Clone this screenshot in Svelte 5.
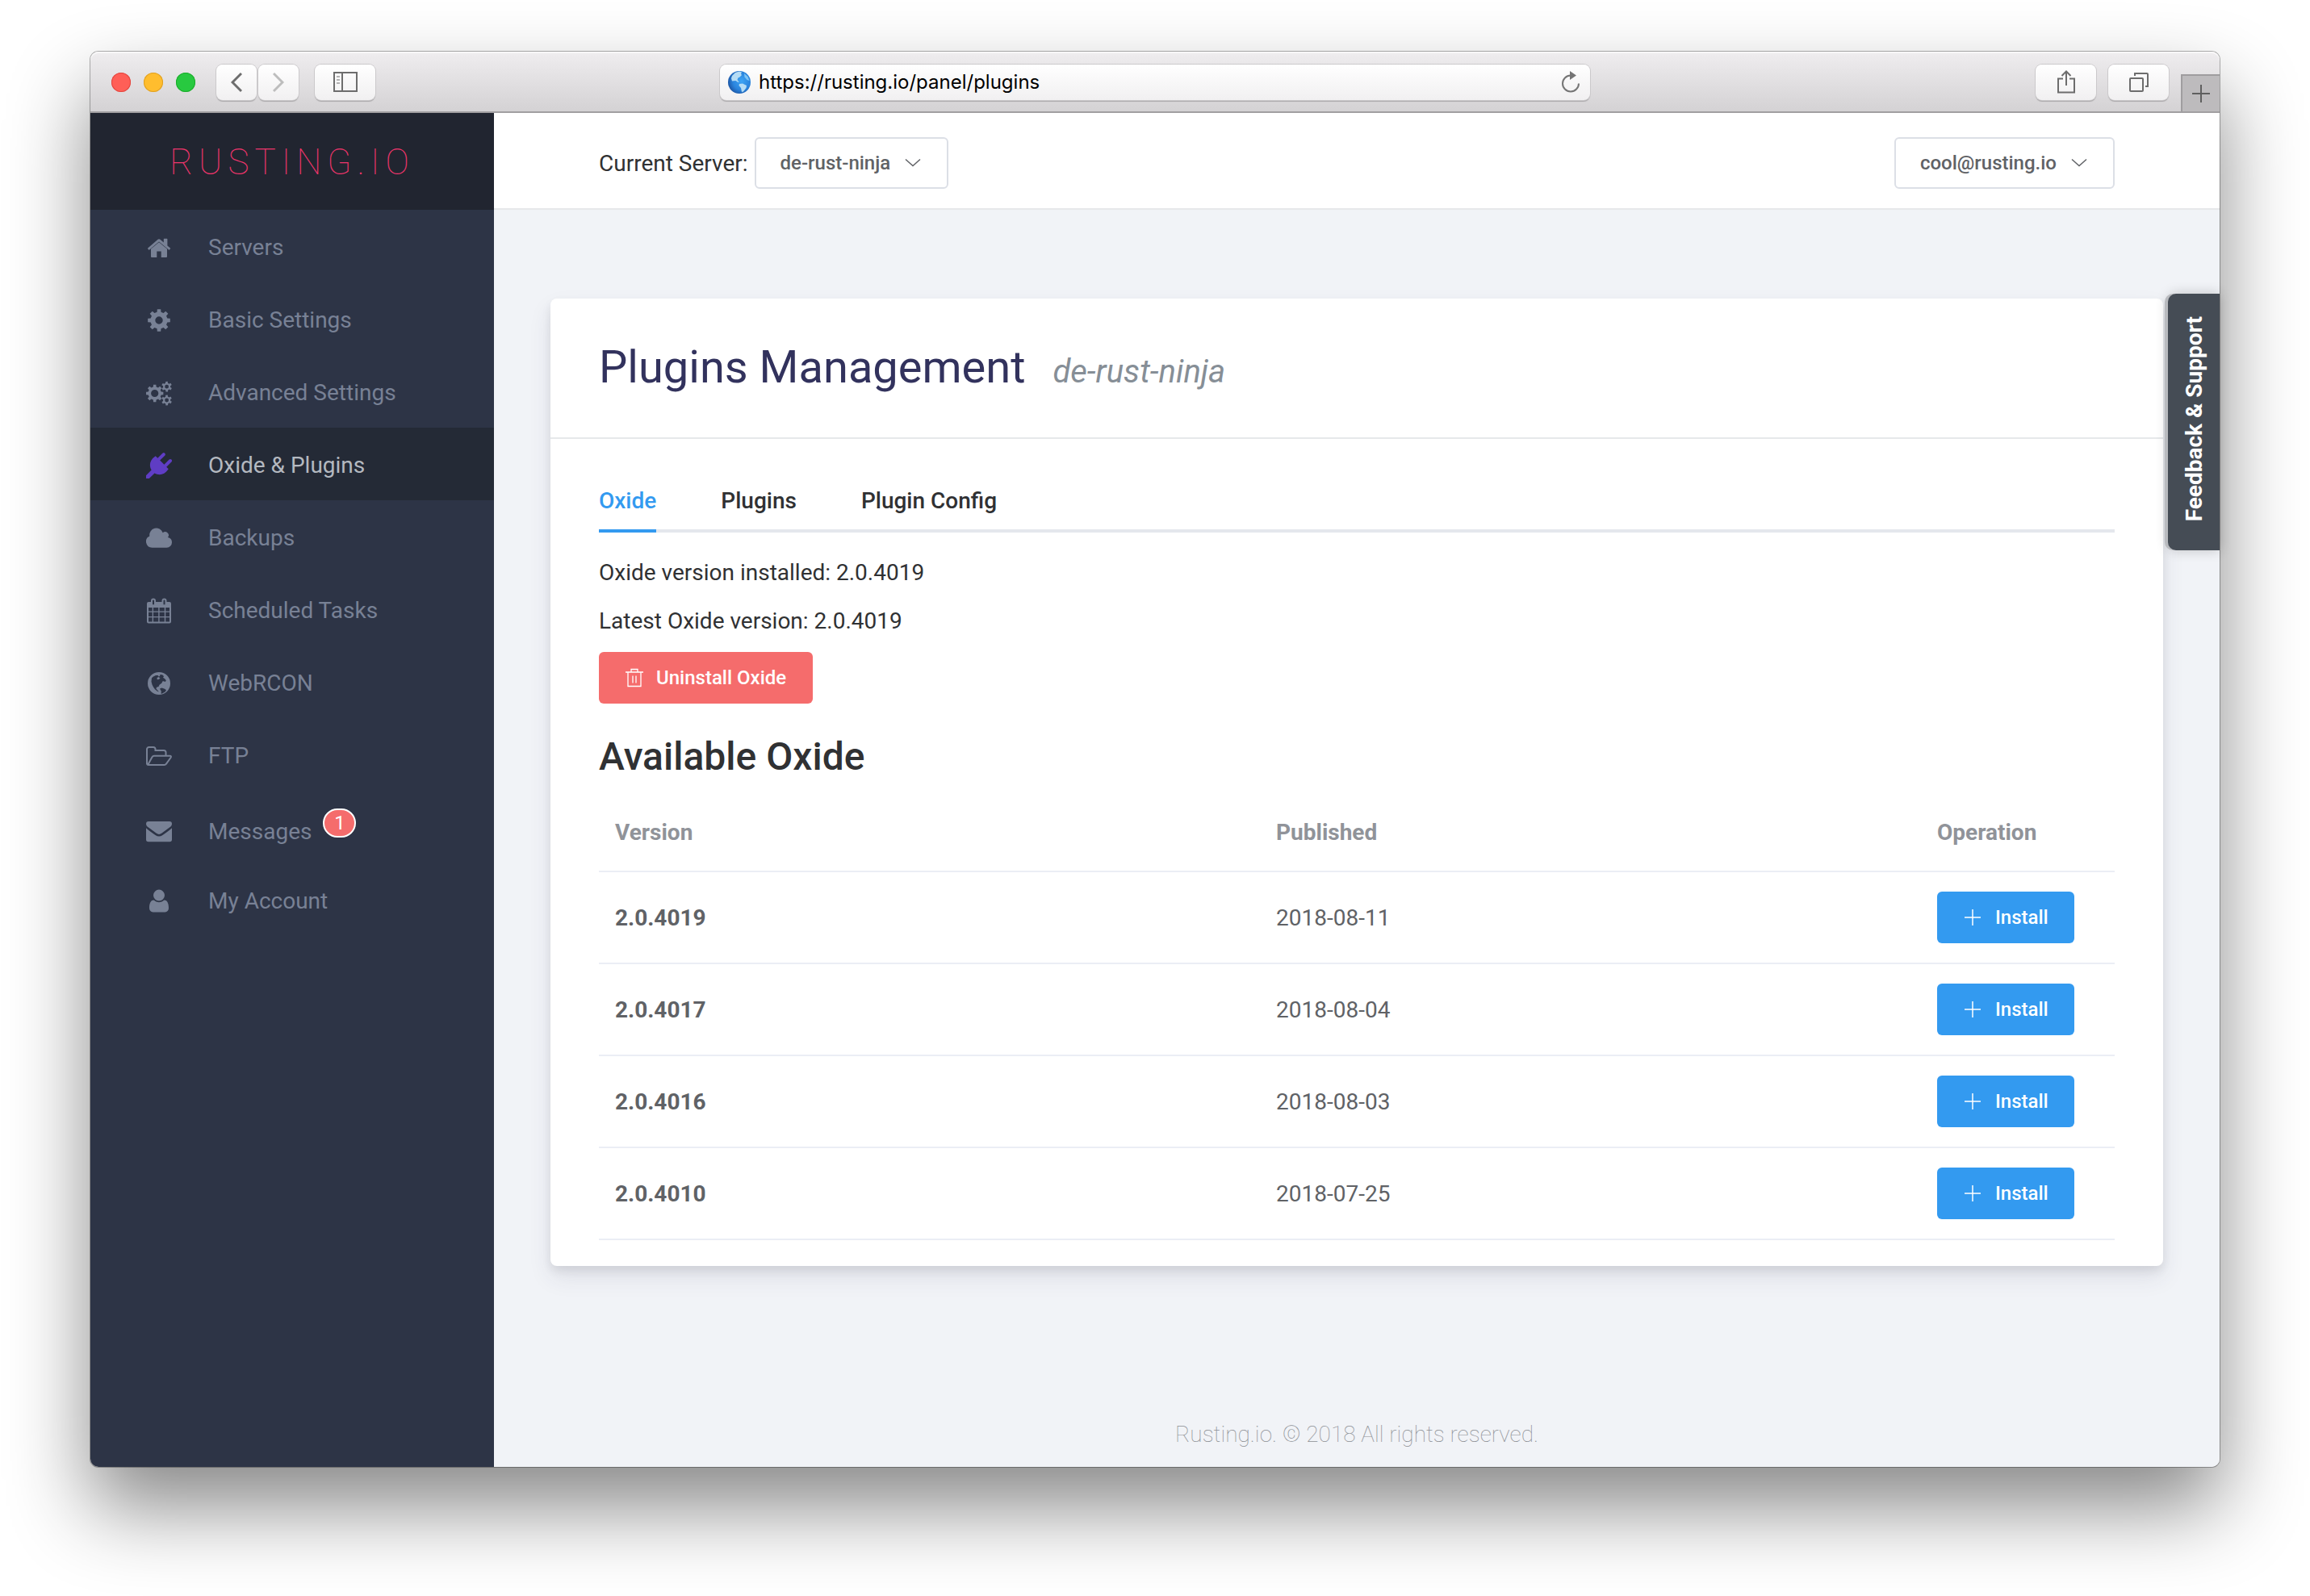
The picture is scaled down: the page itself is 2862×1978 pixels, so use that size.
<script lang="ts">
  interface MenuItem {
    label: string;
    icon: string;
    badge?: number;
  }

  const menu: MenuItem[] = [
    { label: "Servers", icon: "home" },
    { label: "Basic Settings", icon: "cog" },
    { label: "Advanced Settings", icon: "cogs" },
    { label: "Oxide & Plugins", icon: "plug" },
    { label: "Backups", icon: "cloud" },
    { label: "Scheduled Tasks", icon: "calendar" },
    { label: "WebRCON", icon: "globe" },
    { label: "FTP", icon: "folder" },
    { label: "Messages", icon: "envelope", badge: 1 },
    { label: "My Account", icon: "user" },
  ];

  const tabs = ["Oxide", "Plugins", "Plugin Config"];

  const releases = [
    { version: "2.0.4019", published: "2018-08-11" },
    { version: "2.0.4017", published: "2018-08-04" },
    { version: "2.0.4016", published: "2018-08-03" },
    { version: "2.0.4010", published: "2018-07-25" },
  ];

  let activeItem = $state("Oxide & Plugins");
  let activeTab = $state("Oxide");
  let address = $state("https://rusting.io/panel/plugins");

  // outline of a gear with square teeth
  function gear(cx: number, cy: number, outer: number, inner: number, teeth: number, turn = 0) {
    const step = (Math.PI * 2) / teeth;
    const points: string[] = [];
    for (let i = 0; i < teeth; i++) {
      const a = i * step + turn;
      for (const [r, d] of [[inner, -0.3], [outer, -0.2], [outer, 0.2], [inner, 0.3]]) {
        points.push(`${(cx + r * Math.cos(a + d * step)).toFixed(2)} ${(cy + r * Math.sin(a + d * step)).toFixed(2)}`);
      }
    }
    return `M${points.join("L")}Z`;
  }

  function hole(cx: number, cy: number, r: number) {
    return `M${cx - r} ${cy}a${r} ${r} 0 1 0 ${r * 2} 0a${r} ${r} 0 1 0 ${-r * 2} 0Z`;
  }

  const cog = gear(16, 16, 14, 10.6, 8) + hole(16, 16, 4.7);
  const cogs =
    gear(10.7, 16.5, 10.8, 8.2, 8) + hole(10.7, 16.5, 4.6) +
    gear(25.6, 8.2, 6.5, 4.6, 6, 0.5) + hole(25.6, 8.2, 2.4) +
    gear(25.6, 25, 6.5, 4.6, 6, 0.5) + hole(25.6, 25, 2.4);
</script>

{#snippet glyph(name: string)}
  <svg class="glyph" viewBox="0 0 32 32" aria-hidden="true">
    {#if name === "home"}
      <path d="M6 17.4L16 9.2l10 8.2V27a1 1 0 0 1-1 1h-6.3v-7.4h-5.4V28H7a1 1 0 0 1-1-1Z" />
      <path d="M2.2 16.4L14.6 5.8a2.2 2.2 0 0 1 2.8 0L21.8 9.6V5.4a.6.6 0 0 1 .6-.6h3.4a.6.6 0 0 1 .6.6v8.1l3.6 2.9a.7.7 0 0 1 0 .9l-1 1.2a.7.7 0 0 1-1 0L16 8.6 4.2 18.5a.7.7 0 0 1-1 0l-1.1-1.2a.7.7 0 0 1 .1-.9Z" />
    {:else if name === "cog"}
      <path fill-rule="evenodd" d={cog} />
    {:else if name === "cogs"}
      <path fill-rule="evenodd" d={cogs} />
    {:else if name === "plug"}
      <path d="M31.4 8.6a2 2 0 0 0-2.8 0l-6.2 6.2-5.2-5.2 6.200-6.200a2 2 0 0 0-2.800-2.800l-6.300 6.200-2-2a.8.8 0 0 0-1.300 0C4.300 9.500 3.500 16 6.600 21.500L0 28.200V32h3.800l6.700-6.600c5.500 3.100 12 2.300 16.700-4.400a.8.8 0 0 0 0-1.300l-2-2 6.200-6.300a2 2 0 0 0 0-2.800Z" />
    {:else if name === "cloud"}
      <path d="M32 21.300A6.400 6.400 0 0 1 25.600 27.700H7.500A7.500 7.500 0 0 1 4.300 13.400 8.500 8.500 0 0 1 20.700 9.200 4.300 4.300 0 0 1 27 15a6.400 6.400 0 0 1 5 6.300Z" />
    {:else if name === "calendar"}
      <path
        fill-rule="evenodd"
        d="M3 5H6V3.500a3 3 0 0 1 6 0V5h7.500V3.500a3 3 0 0 1 6 0V5H29a2 2 0 0 1 2 2v22.500a2 2 0 0 1-2 2H3a2 2 0 0 1-2-2V7a2 2 0 0 1 2-2ZM8 3.500v4.700h2V3.500a1 1 0 0 0-2 0ZM21.500 3.500v4.700h2V3.500a1 1 0 0 0-2 0ZM3 12v4.500h4.700V12ZM9 12v4.500h6.200V12ZM16.600 12v4.500h6.200V12ZM24.200 12v4.500H29V12ZM3 17.800v5.200h4.700v-5.200ZM9 17.800v5.200h6.200v-5.200ZM16.600 17.800v5.200h6.200v-5.200ZM24.200 17.800v5.200H29v-5.200ZM3 24.300v5.200h4.700v-5.200ZM9 24.300v5.200h6.200v-5.200ZM16.600 24.300v5.200h6.200v-5.200ZM24.200 24.300v5.200H29v-5.200Z"
      />
    {:else if name === "globe"}
      <path
        fill-rule="evenodd"
        d="M16 2a14 14 0 1 0 0 28 14 14 0 0 0 0-28ZM7 9.200l2-1.800 3-1.500 2.800.2.800 1.400 1.800-.8-.6-1.200 2-.6 2 .8 1.200 1.500-1 1.500 2.200 1.600 1.600 2-1 1.600-2-.6-1.600.2-.7 2-3 2.300-1 2.200-2.500.8-.6 1.800 1.800 2 1.600 1.600-1.800-.4-3-2.500L9 20.500l-1.500-3-1-3.800ZM17 22.500l2.500-1 3.500 1.300 2 1.400-1.500 2.300-4 2.300-1-.3.3-2.700Z"
      />
      <path d="M13.500 9l2-1 2 1.500-1.700 1.500-2 .2Z" />
    {:else if name === "folder"}
      <path
        class="line"
        d="M1 26V7.500A2.500 2.500 0 0 1 3.500 5H9a2.500 2.500 0 0 1 2.500 2.500V9H22a2.500 2.500 0 0 1 2.500 2.500V15.500M2 27.300 7.500 17.300a3 3 0 0 1 2.500-1.500H29.500c1.500 0 1.800 1 1 2.200L25 25.700A3 3 0 0 1 22.500 27H3A2 2 0 0 1 1 25"
      />
    {:else if name === "envelope"}
      <path d="M0 7a3 3 0 0 1 3-3h26a3 3 0 0 1 3 3c0 2-1.500 3.500-3 4.600L19.500 18.500c-2.500 1.900-4.500 1.900-7 0L3 11.600C1.500 10.500 0 9 0 7Z" />
      <path d="M0 12.200C3 15 8 18.300 11.500 21c3 2 6 2 9 0 3.500-2.700 8.500-6 11.500-8.800V26.500a2.800 2.800 0 0 1-2.800 2.800H2.800A2.800 2.800 0 0 1 0 26.500Z" />
    {:else if name === "user"}
      <path d="M9 8.600a7 7 0 0 1 14 0 7 7 0 0 1-14 0ZM9.500 14.600a9.500 9.500 0 0 0 13 0C26.500 14.800 28 19 28 24.500c0 3-2 4.900-4.500 4.900h-15C6 29.400 4 27.500 4 24.500 4 19 5.500 14.800 9.500 14.600Z" />
    {/if}
  </svg>
{/snippet}

{#snippet chevron()}
  <svg class="chevron" viewBox="0 0 20 12" aria-hidden="true"><path d="M1 1.500 10 9.500 19 1.500" /></svg>
{/snippet}

<div class="desktop">
  <div class="window">
    <header class="toolbar">
      <div class="tools left">
        <div class="lights">
          <span class="light close"></span>
          <span class="light minimise"></span>
          <span class="light zoom"></span>
        </div>
        <div class="history">
          <button type="button" class="tool" aria-label="Back">
            <svg viewBox="0 0 14 26"><path d="M13 2 2 13l11 11" /></svg>
          </button>
          <button type="button" class="tool forward" aria-label="Forward">
            <svg viewBox="0 0 14 26"><path d="M1 2l11 11L1 24" /></svg>
          </button>
        </div>
        <button type="button" class="tool wide" aria-label="Show sidebar">
          <svg class="side-icon" viewBox="0 0 30 26">
            <path d="M1 1h28v23H1ZM11 1v23" />
            <path class="thin" d="M4 6h4M4 10h4M4 14h4" />
          </svg>
        </button>
      </div>

      <div class="address">
        <svg class="earth" viewBox="0 0 30 30" aria-hidden="true">
          <defs>
            <radialGradient id="sea" cx="0.6" cy="0.45" r="0.65">
              <stop offset="0" stop-color="#3da4f5" />
              <stop offset="0.6" stop-color="#2a83dc" />
              <stop offset="1" stop-color="#1a4f9c" />
            </radialGradient>
          </defs>
          <circle cx="15" cy="15" r="14" fill="url(#sea)" />
          <path fill="#b5dcf5" d="M6 7 10 3l5-1.500 3 1-1 2 1 1.500-2.500 2.500-2 1-1 2.500 2 2.500-1 .5-3-2L6 13.500 5 10Z" />
          <path fill="#b5dcf5" d="M15 17l4-.5 5 2.500-.5 3-3.500 4.500-2 .5-1-5-2.500-3Z" />
          <path fill="#7cc4f5" d="M21 4l4.500 4 2 5-3-1-3-3.500Z" />
        </svg>
        <input type="text" aria-label="Address" bind:value={address} />
        <button type="button" class="reload" aria-label="Reload">
          <svg viewBox="0 0 24 28">
            <path d="M12 5.500A10 10 0 1 0 22 15.500" />
            <path class="solid" d="M11 0l8 5.500-8 5.500Z" />
          </svg>
        </button>
      </div>

      <div class="tools right">
        <button type="button" class="tool wide" aria-label="Share">
          <svg class="share-icon" viewBox="0 0 22 30">
            <path d="M7 10.500H1v17h20v-17h-6M11 19V2M5.500 7 11 1.500 16.500 7" />
          </svg>
        </button>
        <button type="button" class="tool wide" aria-label="Show all tabs">
          <svg class="tabs-icon" viewBox="0 0 24 24">
            <path d="M2 7h14a1 1 0 0 1 1 1v14a1 1 0 0 1-1 1H2a1 1 0 0 1-1-1V8a1 1 0 0 1 1-1ZM7 4V1h15a1 1 0 0 1 1 1v15h-3" />
          </svg>
        </button>
        <button type="button" class="new-tab" aria-label="New tab">
          <svg viewBox="0 0 22 22"><path d="M11 0v22M0 11h22" /></svg>
        </button>
      </div>
    </header>

    <div class="app">
      <aside class="sidebar">
        <a class="logo" href="#home">RUSTING.IO</a>
        <nav>
          {#each menu as item}
            <a
              href="#{item.icon}"
              class="item"
              class:active={item.label === activeItem}
              class:badged={item.badge}
              onclick={() => (activeItem = item.label)}
            >
              {@render glyph(item.icon)}
              <span>{item.label}</span>
              {#if item.badge}
                <span class="badge">{item.badge}</span>
              {/if}
            </a>
          {/each}
        </nav>
      </aside>

      <div class="page">
        <div class="topbar">
          <div class="server">
            <span>Current Server:</span>
            <button type="button" class="btn plain">de-rust-ninja {@render chevron()}</button>
          </div>
          <button type="button" class="btn plain">cool@rusting.io {@render chevron()}</button>
        </div>

        <main>
          <section class="card">
            <header class="card-header">
              <h1>Plugins Management <small>de-rust-ninja</small></h1>
            </header>
            <div class="card-body">
              <div class="tabs" role="tablist">
                {#each tabs as tab}
                  <button
                    type="button"
                    role="tab"
                    aria-selected={tab === activeTab}
                    class:current={tab === activeTab}
                    onclick={() => (activeTab = tab)}
                  >
                    {tab}
                  </button>
                {/each}
              </div>

              <p>Oxide version installed: 2.0.4019</p>
              <p>Latest Oxide version: 2.0.4019</p>
              <button type="button" class="btn danger">
                <svg class="trash" viewBox="0 0 22 24" aria-hidden="true">
                  <path d="M0 5h22M7 5V1.500h8V5M3 5v17.500h16V5M9 9.500v9M13 9.500v9" />
                </svg>
                Uninstall Oxide
              </button>

              <h2>Available Oxide</h2>
              <table>
                <thead>
                  <tr>
                    <th>Version</th>
                    <th>Published</th>
                    <th class="operation">Operation</th>
                  </tr>
                </thead>
                <tbody>
                  {#each releases as release}
                    <tr>
                      <td class="version">{release.version}</td>
                      <td>{release.published}</td>
                      <td>
                        <button type="button" class="btn primary">
                          <svg class="plus" viewBox="0 0 20 20" aria-hidden="true"><path d="M10 0v20M0 10h20" /></svg>
                          Install
                        </button>
                      </td>
                    </tr>
                  {/each}
                </tbody>
              </table>
            </div>
          </section>
        </main>

        <footer>Rusting.io. © 2018 All rights reserved.</footer>
      </div>
    </div>

    <button type="button" class="feedback"><span>Feedback &amp; Support</span></button>
  </div>
</div>

<style>
  :global(body) {
    margin: 0;
    background: #fff;
  }

  .desktop {
    box-sizing: border-box;
    min-height: 100vh;
    display: flex;
    padding: 64px 112px 160px;
    overflow: hidden;
    font-family: Roboto, sans-serif;
    font-size: 28px;
    color: #303133;
  }

  button,
  input {
    font: inherit;
    color: inherit;
  }

  button {
    margin: 0;
    padding: 0;
    border: 0;
    background: none;
    cursor: pointer;
  }

  svg {
    display: block;
    flex: none;
    fill: none;
  }

  .window {
    position: relative;
    flex: 1;
    display: flex;
    flex-direction: column;
    border-radius: 10px;
    box-shadow:
      0 0 0 1px rgba(0, 0, 0, 0.3),
      0 50px 100px rgba(0, 0, 0, 0.47);
  }

  .toolbar {
    box-sizing: border-box;
    height: 76px;
    display: grid;
    grid-template-columns: 1fr minmax(0, 1078px) 1fr;
    align-items: center;
    padding-top: 2px;
    border-bottom: 2px solid #a19fa1;
    border-radius: 10px 10px 0 0;
    background: linear-gradient(#efedef, #d4d2d4);
    box-shadow: inset 0 2px #f8f7f8;
  }

  .tools {
    display: flex;
    align-items: center;
  }

  .left {
    gap: 20px;
    padding-left: 26px;
  }

  .right {
    height: 100%;
    justify-content: flex-end;
    gap: 15px;
  }

  .lights {
    display: flex;
    gap: 16px;
    padding-right: 6px;
  }

  .light {
    width: 24px;
    height: 24px;
    border-radius: 50%;
  }

  .close {
    background: #ff5f57;
    box-shadow: inset 0 0 0 1px #e2463f;
  }

  .minimise {
    background: #ffbd2e;
    box-shadow: inset 0 0 0 1px #dfa023;
  }

  .zoom {
    background: #28c940;
    box-shadow: inset 0 0 0 1px #1dac2c;
  }

  .history {
    display: flex;
    gap: 2px;
  }

  .tool,
  .address {
    height: 44px;
    border-radius: 8px;
    background: linear-gradient(#fff, #f1f0f1);
    box-shadow:
      0 0 0 1px #cbc9cb,
      0 2px 1px #a9a7a9;
  }

  .tool {
    width: 50px;
    display: grid;
    place-items: center;
  }

  .tool svg {
    width: 14px;
    height: 26px;
    stroke: #6d6d6d;
    stroke-width: 3;
  }

  .tool.forward svg {
    stroke: #bdbdbd;
  }

  .tool.wide {
    width: 75px;
  }

  .tool.wide svg {
    stroke-width: 2;
  }

  .tool .side-icon {
    width: 30px;
  }

  .side-icon .thin {
    stroke-width: 1;
  }

  .tool .share-icon {
    width: 22px;
    height: 30px;
  }

  .tool .tabs-icon {
    width: 24px;
    height: 24px;
  }

  .new-tab {
    box-sizing: border-box;
    width: 48px;
    height: 46px;
    align-self: flex-end;
    display: grid;
    place-items: center;
    border: solid #9f9d9f;
    border-width: 2px 0 0 2px;
    background: #bdbbbd;
  }

  .new-tab svg {
    width: 22px;
    height: 22px;
    stroke: #5f5f5f;
    stroke-width: 2;
  }

  .address {
    display: flex;
    align-items: center;
    gap: 9px;
    padding: 0 12px 0 9px;
    box-sizing: border-box;
  }

  .earth {
    width: 30px;
    height: 30px;
  }

  .address input {
    flex: 1;
    min-width: 0;
    padding: 0;
    border: 0;
    outline: 0;
    background: none;
    font-family: Inter, sans-serif;
    font-size: 24px;
    line-height: 32px;
    color: #000;
  }

  .reload svg {
    width: 24px;
    height: 28px;
    stroke: #757575;
    stroke-width: 2;
  }

  .reload .solid {
    fill: #757575;
    stroke: none;
  }

  .app {
    flex: 1;
    display: flex;
    overflow: hidden;
    border-radius: 0 0 10px 10px;
  }

  .sidebar {
    width: 500px;
    flex: none;
    background: #2d3446;
  }

  .logo {
    box-sizing: border-box;
    height: 120px;
    display: flex;
    align-items: center;
    justify-content: center;
    padding-top: 2px;
    background: #212530;
    font-size: 44px;
    font-weight: 100;
    letter-spacing: 7px;
    color: #f0356c;
    text-decoration: none;
  }

  .item {
    box-sizing: border-box;
    height: 90px;
    display: flex;
    align-items: center;
    padding: 3px 0 0 69px;
    color: #788195;
    text-decoration: none;
  }

  .item.badged {
    padding-top: 10px;
  }

  .glyph {
    width: 32px;
    height: 32px;
    margin-right: 45px;
    fill: currentColor;
  }

  .glyph .line {
    fill: none;
    stroke: currentColor;
    stroke-width: 2;
  }

  .item.active {
    background: #242a36;
    color: #b4b9c0;
  }

  .item.active .glyph {
    color: #5f3dc4;
  }

  .badge {
    box-sizing: border-box;
    min-width: 41px;
    margin: 0 0 20px 14px;
    border: 2px solid #fff;
    border-radius: 18px;
    background: #f56c6c;
    font-size: 24px;
    line-height: 32px;
    text-align: center;
    color: #fff;
  }

  .page {
    flex: 1;
    min-width: 0;
    display: flex;
    flex-direction: column;
    background: #f1f3f7;
  }

  .topbar {
    box-sizing: border-box;
    height: 120px;
    display: flex;
    align-items: center;
    justify-content: space-between;
    padding: 6px 130px 0;
    border-bottom: 2px solid #e6e8ea;
    background: #fff;
  }

  .server {
    display: flex;
    align-items: center;
    gap: 8px;
  }

  .btn {
    box-sizing: border-box;
    height: 64px;
    display: inline-flex;
    align-items: center;
    border-radius: 6px;
    font-size: 24px;
    font-weight: 500;
    color: #fff;
  }

  .plain {
    gap: 18px;
    padding: 0 32px 0 30px;
    border: 2px solid #dcdfe6;
    background: #fff;
    color: #606266;
  }

  .chevron {
    width: 20px;
    height: 12px;
    stroke: #606266;
    stroke-width: 1.5;
  }

  .danger {
    gap: 16px;
    padding: 0 33px;
    background: #f56c6c;
  }

  .trash {
    width: 22px;
    height: 24px;
    stroke: #fff;
    stroke-width: 1.3;
  }

  .primary {
    gap: 18px;
    padding: 0 32px 0 34px;
    background: #339af0;
  }

  .plus {
    width: 20px;
    height: 20px;
    stroke: #fff;
    stroke-width: 1.5;
  }

  main {
    padding: 110px 70px 0;
  }

  .card {
    border-radius: 8px;
    background: #fff;
    box-shadow:
      0 14px 28px rgba(50, 50, 93, 0.1),
      0 6px 12px rgba(0, 0, 0, 0.08);
  }

  .card-header {
    padding: 52px 60px 54px;
    border-bottom: 2px solid #e6e8ea;
  }

  h1,
  h2,
  p {
    margin: 0;
  }

  h1 {
    font-size: 56px;
    font-weight: 400;
    line-height: 66px;
    color: #32325d;
  }

  small {
    margin-left: 20px;
    font-size: 40px;
    font-style: italic;
    line-height: 1;
    color: #868e96;
  }

  .card-body {
    padding: 36px 60px 32px;
  }

  .tabs {
    display: flex;
    gap: 80px;
    margin-bottom: 20px;
    box-shadow: inset 0 -4px #e4e7ed;
  }

  .tabs button {
    box-sizing: border-box;
    height: 80px;
    padding-top: 4px;
    border-bottom: 4px solid transparent;
    font-weight: 500;
  }

  .tabs .current {
    border-color: #339af0;
    color: #339af0;
  }

  p {
    line-height: 60px;
  }

  .danger {
    margin-top: 8px;
  }

  h2 {
    margin-top: 36px;
    font-size: 48px;
    font-weight: 500;
    line-height: 60px;
  }

  table {
    width: 100%;
    table-layout: fixed;
    border-collapse: collapse;
    margin-top: 16px;
    color: #606266;
  }

  th,
  td {
    box-sizing: border-box;
    padding: 0 20px;
    border-bottom: 2px solid #ebeef5;
    text-align: left;
  }

  th {
    height: 96px;
    font-weight: 700;
    color: #909399;
  }

  td {
    height: 114px;
  }

  .version {
    font-weight: 700;
  }

  .operation {
    width: 240px;
  }

  footer {
    margin-top: auto;
    padding-bottom: 20px;
    font-weight: 100;
    line-height: 40px;
    text-align: center;
    color: #8e9196;
  }

  .feedback {
    position: absolute;
    top: 300px;
    right: 0;
    width: 64px;
    height: 318px;
    border-radius: 10px 0 0 10px;
    background: #454c55;
    box-shadow: -4px 0 #b9bbbf, 0 0 16px rgba(0, 0, 0, 0.2);
    color: #fff;
  }

  .feedback span {
    writing-mode: vertical-rl;
    transform: rotate(180deg);
    font-size: 28px;
    font-weight: 700;
    white-space: nowrap;
  }
</style>
